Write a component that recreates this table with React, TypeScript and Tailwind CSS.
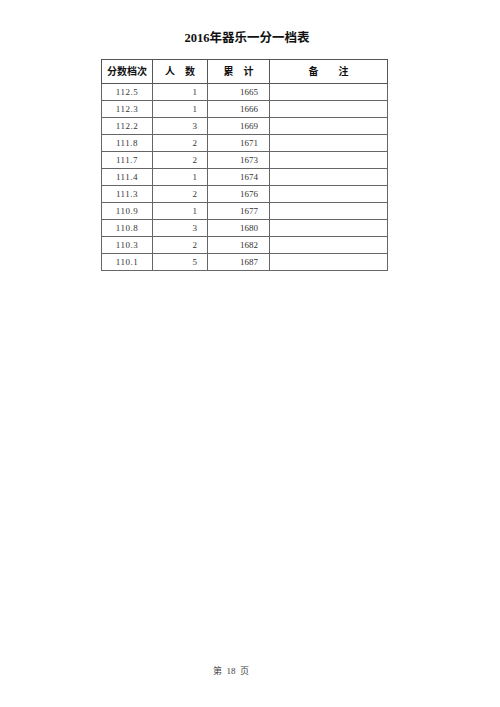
import React from "react";

const rows = [
  ["112.5", "1", "1665"],
  ["112.3", "1", "1666"],
  ["112.2", "3", "1669"],
  ["111.8", "2", "1671"],
  ["111.7", "2", "1673"],
  ["111.4", "1", "1674"],
  ["111.3", "2", "1676"],
  ["110.9", "1", "1677"],
  ["110.8", "3", "1680"],
  ["110.3", "2", "1682"],
  ["110.1", "5", "1687"],
];

const font = { fontFamily: '"Liberation Serif", "Noto Sans CJK SC", serif' };

export default function App() {
  return (
    <div className="flex min-h-[707px] w-[500px] flex-col bg-white text-[#222]" style={font}>
      <h1 className="mt-[30px] pr-[6px] text-center text-[12.5px] font-bold leading-[16px] text-[#111]">
        2016年器乐一分一档表
      </h1>

      <table className="ml-[101px] mt-[13px] w-[287px] table-fixed border-collapse border-[1.5px] border-[#444]">
        <colgroup>
          <col className="w-[51px]" />
          <col className="w-[55px]" />
          <col className="w-[62px]" />
          <col />
        </colgroup>
        <thead>
          <tr className="h-[24px] text-[10px] font-bold text-[#111]">
            <th className="border border-[#555] p-0 text-center">分数档次</th>
            <th className="border border-[#555] p-0 text-center">人&emsp;数</th>
            <th className="border border-[#555] p-0 text-center">累&emsp;计</th>
            <th className="border border-[#555] p-0 text-center">备&emsp;&emsp;注</th>
          </tr>
        </thead>
        <tbody>
          {rows.map((r) => (
            <tr key={r[0]} className="h-[17px] text-[9px] leading-[16px] text-[#333]">
              <td className="border border-[#666] p-0 text-center tracking-[0.5px]">{r[0]}</td>
              <td className="border border-[#666] p-0 pr-[10px] text-right">{r[1]}</td>
              <td className="border border-[#666] p-0 pr-[11px] text-right">{r[2]}</td>
              <td className="border border-[#666] p-0"></td>
            </tr>
          ))}
        </tbody>
      </table>

      <div className="mb-[29px] ml-[213px] mt-auto flex w-[36px] justify-between text-[9px] text-[#444]">
        <span>第</span>
        <span>18</span>
        <span>页</span>
      </div>
    </div>
  );
}
